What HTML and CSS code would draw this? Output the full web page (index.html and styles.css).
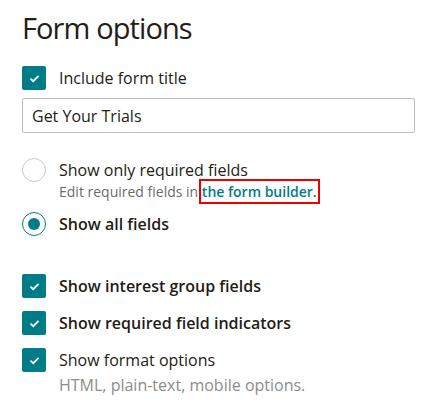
FILE: index.html
```html
<!DOCTYPE html>
<html lang="en">
<head>
  <meta charset="UTF-8" />
  <title>Form options</title>
  <link rel="stylesheet" href="styles.css">
</head>
<body>
  <div class="panel">
    <h2>Form options</h2>

    <label class="option">
      <span class="check"><svg viewBox="0 0 12 10"><path d="M1.5 5.2 4.6 8 10.5 2"/></svg></span>
      <span class="text">Include form title</span>
    </label>
    <input class="title-input" type="text" value="Get Your Trials" />

    <div class="group radios">
      <div>
        <label class="option">
          <span class="radio"></span>
          <span class="text">Show only required fields</span>
        </label>
        <p class="help">Edit required fields in <a href="#" class="marked">the form builder.</a></p>
      </div>
      <label class="option">
        <span class="radio on"></span>
        <span class="text strong">Show all fields</span>
      </label>
    </div>

    <div class="group checks">
      <label class="option">
        <span class="check"><svg viewBox="0 0 12 10"><path d="M1.5 5.2 4.6 8 10.5 2"/></svg></span>
        <span class="text strong">Show interest group fields</span>
      </label>
      <label class="option">
        <span class="check"><svg viewBox="0 0 12 10"><path d="M1.5 5.2 4.6 8 10.5 2"/></svg></span>
        <span class="text strong">Show required field indicators</span>
      </label>
      <div>
        <label class="option">
          <span class="check"><svg viewBox="0 0 12 10"><path d="M1.5 5.2 4.6 8 10.5 2"/></svg></span>
          <span class="text">Show format options</span>
        </label>
        <p class="help light">HTML, plain-text, mobile options.</p>
      </div>
    </div>
  </div>
</body>
</html>
```

FILE: styles.css
```css
* {
  margin: 0;
  padding: 0;
  box-sizing: border-box;
}

body {
  font-family: 'Open Sans', sans-serif;
  color: #241c15;
  background: #fff;
}

.panel {
  padding: 10px 22px 0 22px;
  width: 437px;
  display: flex;
  flex-direction: column;
}

h2 {
  font-size: 29px;
  font-weight: 400;
  letter-spacing: -0.9px;
  line-height: 36px;
  margin-bottom: 20px;
}

.option {
  display: flex;
  align-items: center;
  gap: 13px;
  font-size: 16px;
  line-height: 24px;
}

.check {
  width: 24px;
  height: 24px;
  border-radius: 2px;
  background: #007c89;
  display: flex;
  align-items: center;
  justify-content: center;
  flex: none;
}

.check svg {
  width: 11px;
  height: 9px;
  fill: none;
  stroke: #fff;
  stroke-width: 2;
}

.radio {
  width: 24px;
  height: 24px;
  border-radius: 50%;
  border: 1px solid #c9c9c9;
  flex: none;
  display: flex;
  align-items: center;
  justify-content: center;
}

.radio.on {
  border: 1.5px solid #007c89;
}

.radio.on::after {
  content: '';
  width: 12px;
  height: 12px;
  border-radius: 50%;
  background: #007c89;
}

.strong {
  font-weight: 600;
}

.title-input {
  margin-top: 8px;
  height: 35px;
  border: 1px solid #bdbdbd;
  border-radius: 2px;
  padding: 0 9px;
  font: inherit;
  font-size: 16px;
  color: #241c15;
}

.group {
  display: flex;
  flex-direction: column;
}

.radios {
  margin-top: 25px;
  gap: 10px;
}

.checks {
  margin-top: 38px;
  gap: 13px;
}

.help {
  margin-left: 37px;
  font-size: 14px;
  line-height: 20px;
  color: #6b6b6b;
}

.help a {
  color: #007c89;
  text-decoration: none;
  font-weight: 600;
}

.marked {
  outline: 2px solid #ec0000;
  outline-offset: 1px;
}

.help.light {
  font-size: 16px;
  line-height: 26px;
  color: #8c8c8c;
}
```
